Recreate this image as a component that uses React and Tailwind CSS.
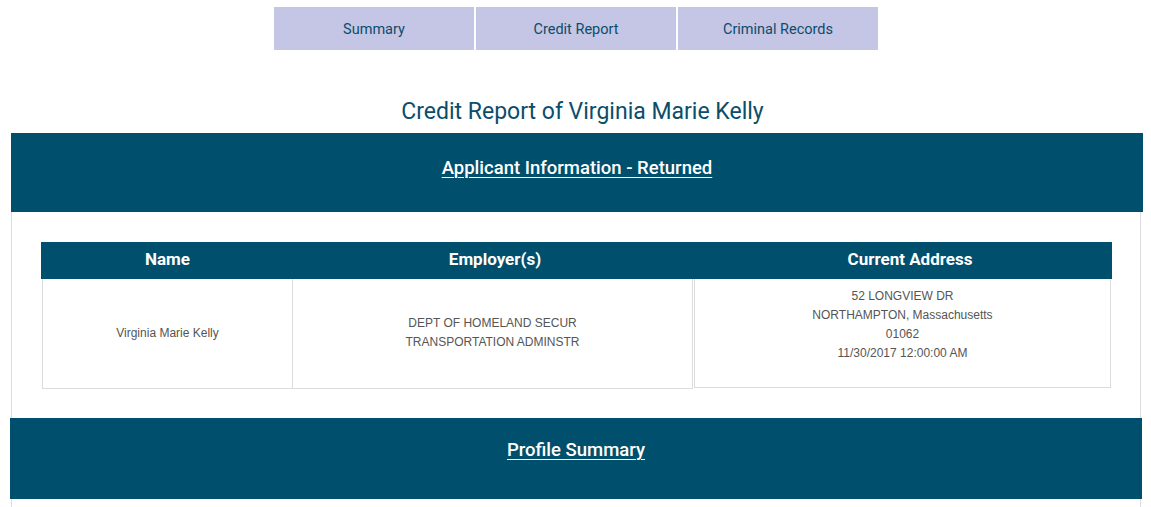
export default function App() {
  const tabs = ["Summary", "Credit Report", "Criminal Records"];

  return (
    <div
      className="w-[1151px] h-[507px] overflow-hidden bg-white"
      style={{ fontFamily: "Roboto, 'Liberation Sans', sans-serif" }}
    >
      {/* Tabs */}
      <div className="flex justify-center gap-[2px] pt-[7px] pl-[1px]">
        {tabs.map((t) => (
          <div
            key={t}
            className="w-[200px] h-[43px] flex items-center justify-center bg-[#c5c5e5] text-[#0b4d6a] text-[14.5px] pt-[3px]"
          >
            {t}
          </div>
        ))}
      </div>

      {/* Title */}
      <h1 className="mt-[47px] pl-[14px] text-center text-[23px] leading-[28px] text-[#0b4d6a] font-normal pt-[1px]">
        Credit Report of Virginia Marie Kelly
      </h1>

      {/* Applicant Information band */}
      <div className="mt-[7px] ml-[11px] w-[1132px] h-[79px] bg-[#004f6c] flex justify-center pt-[24px]">
        <span className="text-white text-[18.5px] leading-[22px] font-medium underline underline-offset-[3px] decoration-1">
          Applicant Information - Returned
        </span>
      </div>

      {/* Panel */}
      <div className="ml-[11px] w-[1130px] border-l border-r border-[#dcdcdc] pt-[30px] pb-[29px] px-[29px]">
        {/* Header */}
        <div className="flex w-[1071px] h-[37px] bg-[#004f6c] text-white text-[17px] font-bold">
          <div className="w-[253px] flex items-center justify-center pb-[2px]">Name</div>
          <div className="w-[402px] flex items-center justify-center pb-[2px]">Employer(s)</div>
          <div className="flex-1 flex items-center justify-center pl-[12px] pb-[2px]">Current Address</div>
        </div>
        {/* Body */}
        <div
          className="flex text-[12px] text-[#555] leading-[19px]"
          style={{ fontFamily: "'Liberation Sans', Arial, sans-serif" }}
        >
          <div className="ml-[1px] w-[250px] h-[110px] border-l border-b border-[#dcdcdc] flex items-center justify-center">
            Virginia Marie Kelly
          </div>
          <div className="w-[401px] h-[110px] border-l border-r border-b border-[#dcdcdc] flex flex-col items-center justify-center pb-[2px]">
            <div>DEPT OF HOMELAND SECUR</div>
            <div>TRANSPORTATION ADMINSTR</div>
          </div>
          <div className="ml-[1px] w-[417px] h-[109px] border-l border-r border-b border-[#dcdcdc] flex flex-col items-center pt-[8px]">
            <div>52 LONGVIEW DR</div>
            <div>NORTHAMPTON, Massachusetts</div>
            <div>01062</div>
            <div>11/30/2017 12:00:00 AM</div>
          </div>
        </div>
      </div>

      {/* Profile Summary band */}
      <div className="ml-[10px] w-[1132px] h-[81px] bg-[#004f6c] flex justify-center pt-[21px]">
        <span className="text-white text-[18.5px] leading-[22px] font-medium underline underline-offset-[3px] decoration-1">
          Profile Summary
        </span>
      </div>
      <div className="ml-[11px] w-[1130px] h-[20px] border-l border-r border-[#dcdcdc]" />
    </div>
  );
}
